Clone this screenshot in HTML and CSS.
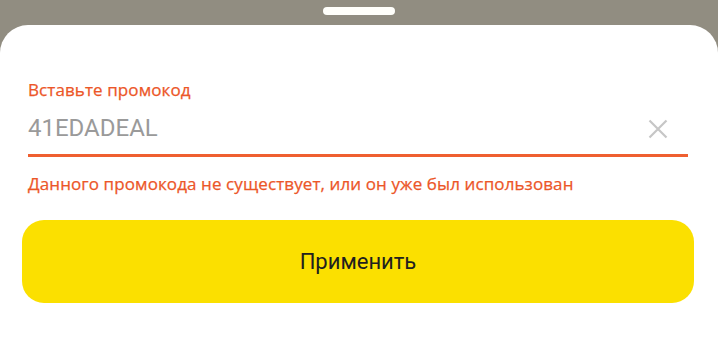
FILE: index.html
```html
<!DOCTYPE html>
<html lang="ru">
<head>
<meta charset="utf-8">
<link rel="stylesheet" href="styles.css">
</head>
<body>
<div class="page">
  <div class="top">
    <div class="handle"></div>
  </div>
  <div class="sheet">
    <div class="field">
      <div class="label">Вставьте промокод</div>
      <div class="input-row">
        <span class="value">41EDADEAL</span>
        <svg class="clear" width="20" height="20" viewBox="0 0 20 20" aria-hidden="true">
          <path d="M1.5 1.5 L18.5 18.5 M18.5 1.5 L1.5 18.5" stroke="#c6c6c6" stroke-width="2.2" fill="none" stroke-linecap="butt"/>
        </svg>
      </div>
      <div class="error">Данного промокода не существует, или он уже был использован</div>
    </div>
    <button class="apply" type="button">Применить</button>
  </div>
</div>
</body>
</html>
```

FILE: styles.css
```css
html, body {
  margin: 0;
  padding: 0;
  height: 100%;
}

body {
  background: #918d81;
  font-family: "Open Sans", "Noto Sans", sans-serif;
}

.page {
  display: flex;
  flex-direction: column;
  height: 100vh;
}

.top {
  height: 25px;
  flex: none;
  display: flex;
  justify-content: center;
  padding-top: 7px;
  box-sizing: border-box;
}

.handle {
  width: 72px;
  height: 8px;
  border-radius: 4px;
  background: #fffffb;
}

.sheet {
  flex: 1;
  background: #ffffff;
  border-radius: 28px 28px 0 0;
  padding: 55px 24px 0 22px;
  display: flex;
  flex-direction: column;
}

.field {
  margin: 0 0 0 6px;
  padding-right: 6px;
}

.label {
  font-size: 17px;
  line-height: 20px;
  font-weight: 500;
  color: #ec5628;
  letter-spacing: 0.1px;
  -webkit-text-stroke: 0.25px #ec5628;
}

.input-row {
  margin-top: 14px;
  display: flex;
  align-items: center;
  justify-content: space-between;
  padding-bottom: 12px;
  border-bottom: 3px solid #ef5f30;
}

.value {
  font-family: Roboto, "Open Sans", sans-serif;
  font-size: 24px;
  line-height: 28px;
  color: #9a9a9a;
}

.clear {
  margin-right: 20px;
  margin-top: 2px;
}

.error {
  margin-top: 17px;
  font-size: 17px;
  line-height: 20px;
  font-weight: 500;
  color: #ec5628;
  letter-spacing: 0.1px;
  -webkit-text-stroke: 0.25px #ec5628;
}

.apply {
  margin-top: 26px;
  height: 83px;
  width: 100%;
  border: none;
  border-radius: 22px;
  background: #fbe000;
  color: #21201f;
  font-family: Roboto, "Open Sans", sans-serif;
  font-size: 22px;
  padding: 0;
}
```
